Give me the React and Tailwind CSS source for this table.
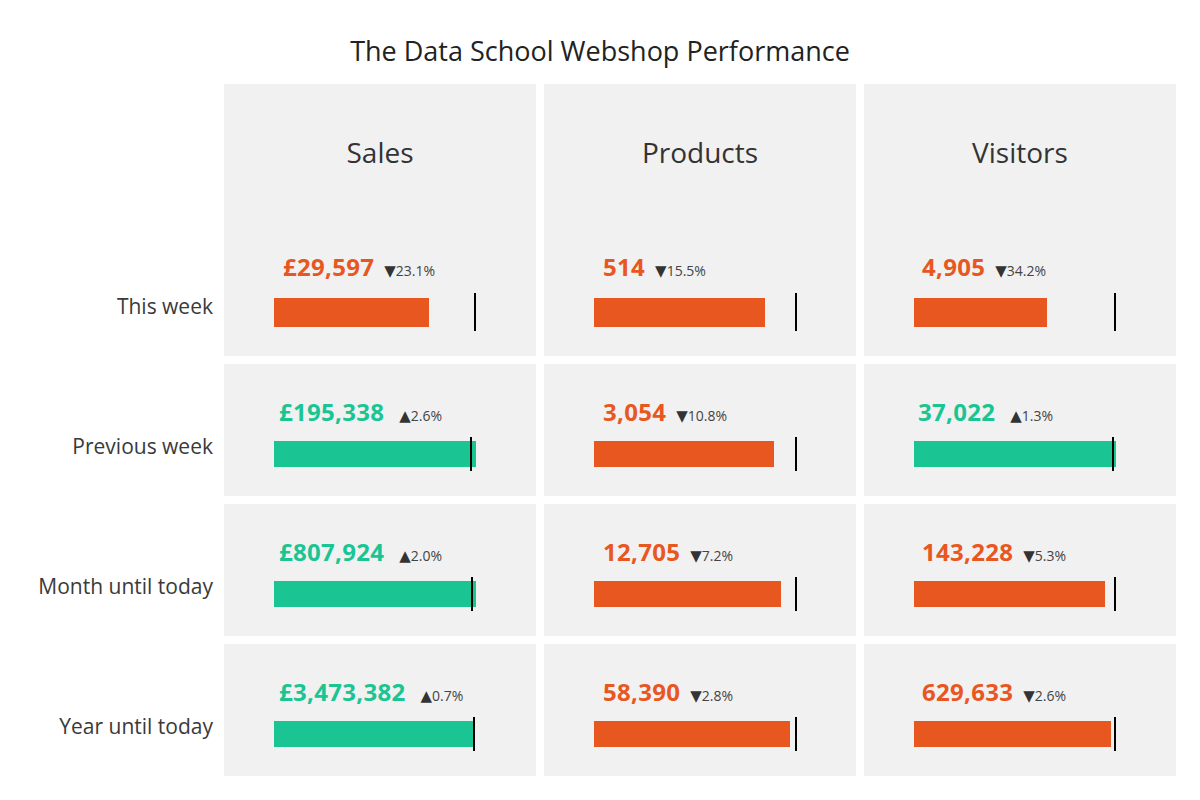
import React from 'react'

const ORANGE = 'bg-[#e8571f]'

const columns = [
  { title: 'Sales', key: 'sales' },
  { title: 'Products', key: 'products' },
  { title: 'Visitors', key: 'visitors' },
]

const rows = ['This week', 'Previous week', 'Month until today', 'Year until today']

// bar / target are px from the start of the bar area
const cells = {
  sales: [
    { value: '£29,597', pct: '23.1%', up: false, pad: 59, bar: 155, target: 200 },
    { value: '£195,338', pct: '2.6%', up: true, pad: 55, bar: 202, target: 196 },
    { value: '£807,924', pct: '2.0%', up: true, pad: 55, bar: 202, target: 197 },
    { value: '£3,473,382', pct: '0.7%', up: true, pad: 55, bar: 200, target: 199 },
  ],
  products: [
    { value: '514', pct: '15.5%', up: false, pad: 59, bar: 171, target: 201 },
    { value: '3,054', pct: '10.8%', up: false, pad: 59, bar: 180, target: 201 },
    { value: '12,705', pct: '7.2%', up: false, pad: 59, bar: 187, target: 201 },
    { value: '58,390', pct: '2.8%', up: false, pad: 59, bar: 196, target: 201 },
  ],
  visitors: [
    { value: '4,905', pct: '34.2%', up: false, pad: 58, bar: 133, target: 200 },
    { value: '37,022', pct: '1.3%', up: true, pad: 54, bar: 202, target: 198 },
    { value: '143,228', pct: '5.3%', up: false, pad: 58, bar: 191, target: 200 },
    { value: '629,633', pct: '2.6%', up: false, pad: 58, bar: 197, target: 200 },
  ],
}

function Cell({ cell, first }) {
  return (
    <div className={first ? 'pt-[27px]' : 'pt-[32px]'}>
      <div className="flex h-[32px] items-baseline leading-[32px] overflow-visible" style={{ paddingLeft: cell.pad }}>
        <span className={`text-[24px] font-bold tracking-[0.3px] ${cell.up ? 'text-[#1ac593]' : 'text-[#e8571f]'}`}>
          {cell.value}
        </span>
        <span className={`text-[14px] text-[#444] ${cell.up ? 'ml-[15px]' : 'ml-[10px]'}`}>
          <span className="font-['DejaVu_Sans'] text-[15px] text-[#333]">{cell.up ? '▲' : '▼'}</span>
          {cell.pct}
        </span>
      </div>
      <div className={`relative ml-[50px] ${first ? 'mt-[15px] h-[29px]' : 'mt-[13px] h-[26px]'}`}>
        <div
          className={`h-full ${cell.up ? 'bg-[#1ac593]' : ORANGE}`}
          style={{ width: cell.bar }}
        />
        <div
          className={`absolute w-[2px] bg-black ${first ? 'top-[-5px] bottom-[-4px]' : 'top-[-4px] bottom-[-4px]'}`}
          style={{ left: cell.target }}
        />
      </div>
    </div>
  )
}

export default function App() {
  return (
    <div className="w-[1200px] h-[800px] bg-white text-[#333] font-['Open_Sans','Noto_Sans',sans-serif]">
      <div className="h-[84px] pt-[31px] text-center text-[27px] leading-[40px] text-[#222]">
        The Data School Webshop Performance
      </div>
      <div className="grid grid-cols-[216px_312px_312px_312px] grid-rows-[132px_132px_132px_132px_132px] gap-2">
        {/* left labels */}
        <div className="col-start-1 row-start-1" />
        {rows.map((r, i) => (
          <div
            key={r}
            className={`col-start-1 pt-[68px] pr-[3px] text-right text-[21px] leading-[28px] text-[#3a3a3a] ${
              ['row-start-2', 'row-start-3', 'row-start-4', 'row-start-5'][i]
            }`}
          >
            {r}
          </div>
        ))}

        {columns.map((col, ci) => {
          const colClass = ['col-start-2', 'col-start-3', 'col-start-4'][ci]
          return (
            <React.Fragment key={col.key}>
              <div className={`${colClass} row-start-1 row-span-2 bg-[#f1f1f1] flex flex-col`}>
                <div className="h-[140px] pt-[48px] text-center text-[28px] leading-[40px] text-[#333]">
                  {col.title}
                </div>
                <Cell cell={cells[col.key][0]} first />
              </div>
              {cells[col.key].slice(1).map((cell, ri) => (
                <div
                  key={ri}
                  className={`${colClass} ${['row-start-3', 'row-start-4', 'row-start-5'][ri]} bg-[#f1f1f1]`}
                >
                  <Cell cell={cell} />
                </div>
              ))}
            </React.Fragment>
          )
        })}
      </div>
    </div>
  )
}
